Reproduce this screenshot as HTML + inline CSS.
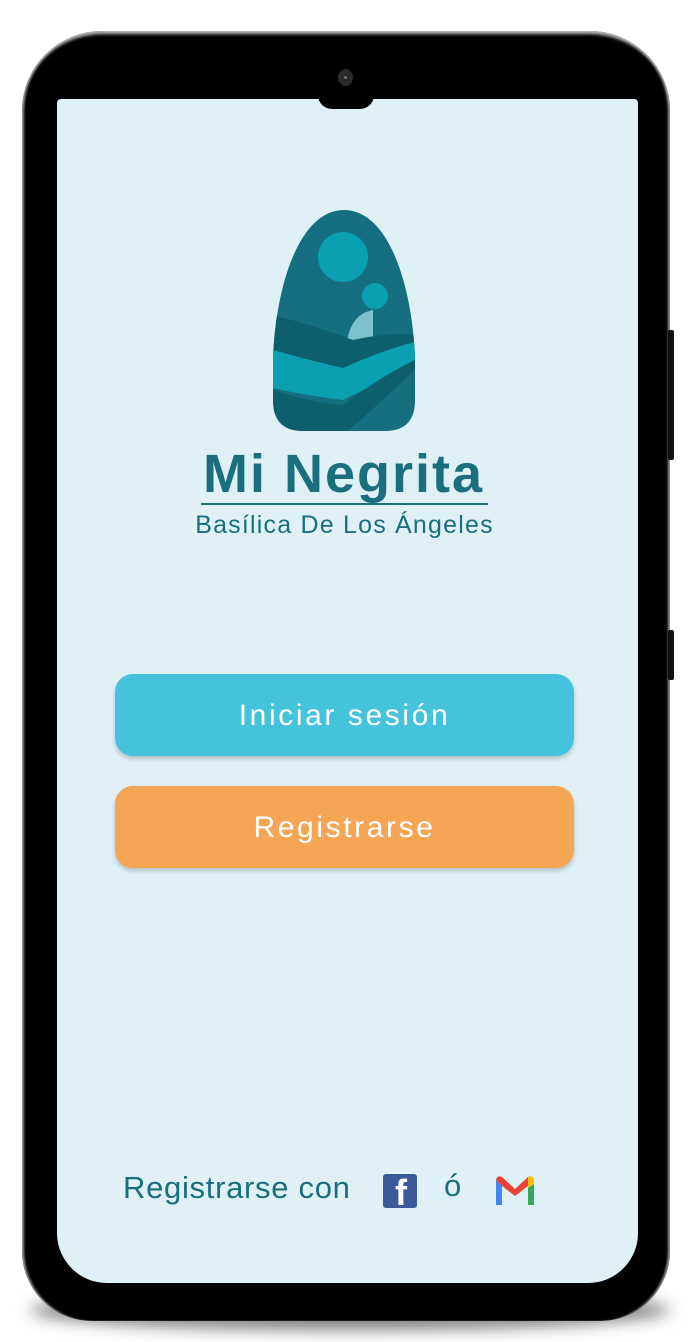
<!DOCTYPE html>
<html><head><meta charset="utf-8"><style>
body{margin:0;width:689px;height:1342px;background:#fff;position:relative;overflow:hidden;font-family:"Liberation Sans",sans-serif}
.shadow{position:absolute;left:30px;top:1290px;width:640px;height:40px;background:#000;filter:blur(8px);opacity:.5;border-radius:50%}
.phone{position:absolute;left:22px;top:31px;width:648px;height:1290px;background:#000;border-radius:80px 80px 70px 70px;box-shadow:inset 0 6px 3px -3px #bbb,inset 3px 0 2px -1px #999,inset -3px 0 2px -1px #999}
.btnside{position:absolute;background:#111;width:6px;left:668px;border-radius:2px}
.screen{position:absolute;left:57px;top:99px;width:581px;height:1184px;background:#dff1f7;border-radius:4px 4px 50px 50px;overflow:hidden}
.notch{position:absolute;left:318px;top:95px;width:56px;height:14px;background:#000;border-radius:0 0 20px 20px}
.cam{position:absolute;left:338px;top:69px;width:15px;height:17px;border-radius:50%;background:#2a2a2a}
.cam:after{content:"";position:absolute;left:6px;top:7px;width:3px;height:3px;border-radius:50%;background:#777}
.title{position:absolute;left:0;width:689px;text-align:center;color:#1a6e7e}
.btn{position:absolute;left:115px;width:459px;height:82px;border-radius:18px;color:#fff;text-align:center;line-height:84px;font-size:30px;letter-spacing:2.6px;box-shadow:0 3px 5px rgba(0,0,0,.2)}
</style></head><body>
<div class="shadow"></div>
<div class="phone"></div>
<div class="btnside" style="top:330px;height:130px"></div>
<div class="btnside" style="top:630px;height:50px"></div>
<div class="screen"></div>
<div class="notch"></div>
<div class="cam"></div>
<svg style="position:absolute;left:273px;top:210px" width="142" height="221" viewBox="0 0 142 221">
<defs><clipPath id="c"><path d="M71 0C25 0 2 80 0 150V190Q0 221 30 221H112Q142 221 142 190V150C140 80 117 0 71 0Z"/></clipPath></defs>
<g clip-path="url(#c)">
<rect width="142" height="221" fill="#156f80"/>
<circle cx="70" cy="47" r="25" fill="#0aa0b2"/>
<circle cx="102" cy="86" r="13" fill="#0aa0b2"/>
<path d="M74 132Q78 104 100 100L100 132Z" fill="#7cc3cd"/>
<path d="M0 105Q40 115 80 130Q115 122 142 125V150Q100 165 60 180Q30 175 0 165Z" fill="#0d5f6e"/>
<path d="M0 140Q35 150 70 158Q110 140 142 132V155Q100 175 70 190Q30 185 0 178Z" fill="#0aa0b2"/>
<path d="M0 180Q35 192 70 195Q110 165 142 150V160Q110 190 75 221H0Z" fill="#0d5f6e"/>
</g></svg>
<div class="title" style="top:443px;font-size:54px;font-weight:bold;letter-spacing:2px;left:-1px">Mi Negrita</div>
<div style="position:absolute;left:201px;top:503px;width:287px;height:2px;background:#1a6e7e"></div>
<div class="title" style="top:511px;font-size:25px;letter-spacing:1.2px;left:0">Basílica De Los Ángeles</div>
<div class="btn" style="top:674px;background:#45c3dc">Iniciar sesión</div>
<div class="btn" style="top:786px;background:#f4a654">Registrarse</div>
<div style="position:absolute;left:123px;top:1170px;font-size:31px;letter-spacing:0.7px;color:#1a6e7e">Registrarse con</div>
<div style="position:absolute;left:383px;top:1174px;width:34px;height:34px;background:#3b5a9a;border-radius:3px;overflow:hidden"><span style="position:absolute;left:12px;top:-2px;color:#fff;font-weight:bold;font-size:36px">f</span></div>
<div style="position:absolute;left:444px;top:1168px;font-size:31px;color:#1a6e7e">ó</div>
<svg style="position:absolute;left:494px;top:1173px" width="42" height="35" viewBox="0 0 42 33">
<path d="M2 6V31H8V12Z" fill="#4285f4"/><path d="M40 6V31H34V12Z" fill="#34a853"/>
<path d="M2 6Q3 1 8 3L21 15L34 3Q39 1 40 6L34 12L21 22L8 12Z" fill="#ea4335"/>
<path d="M34 3Q39 1 40 6V10L34 14Z" fill="#fbbc04"/></svg>
</body></html>
